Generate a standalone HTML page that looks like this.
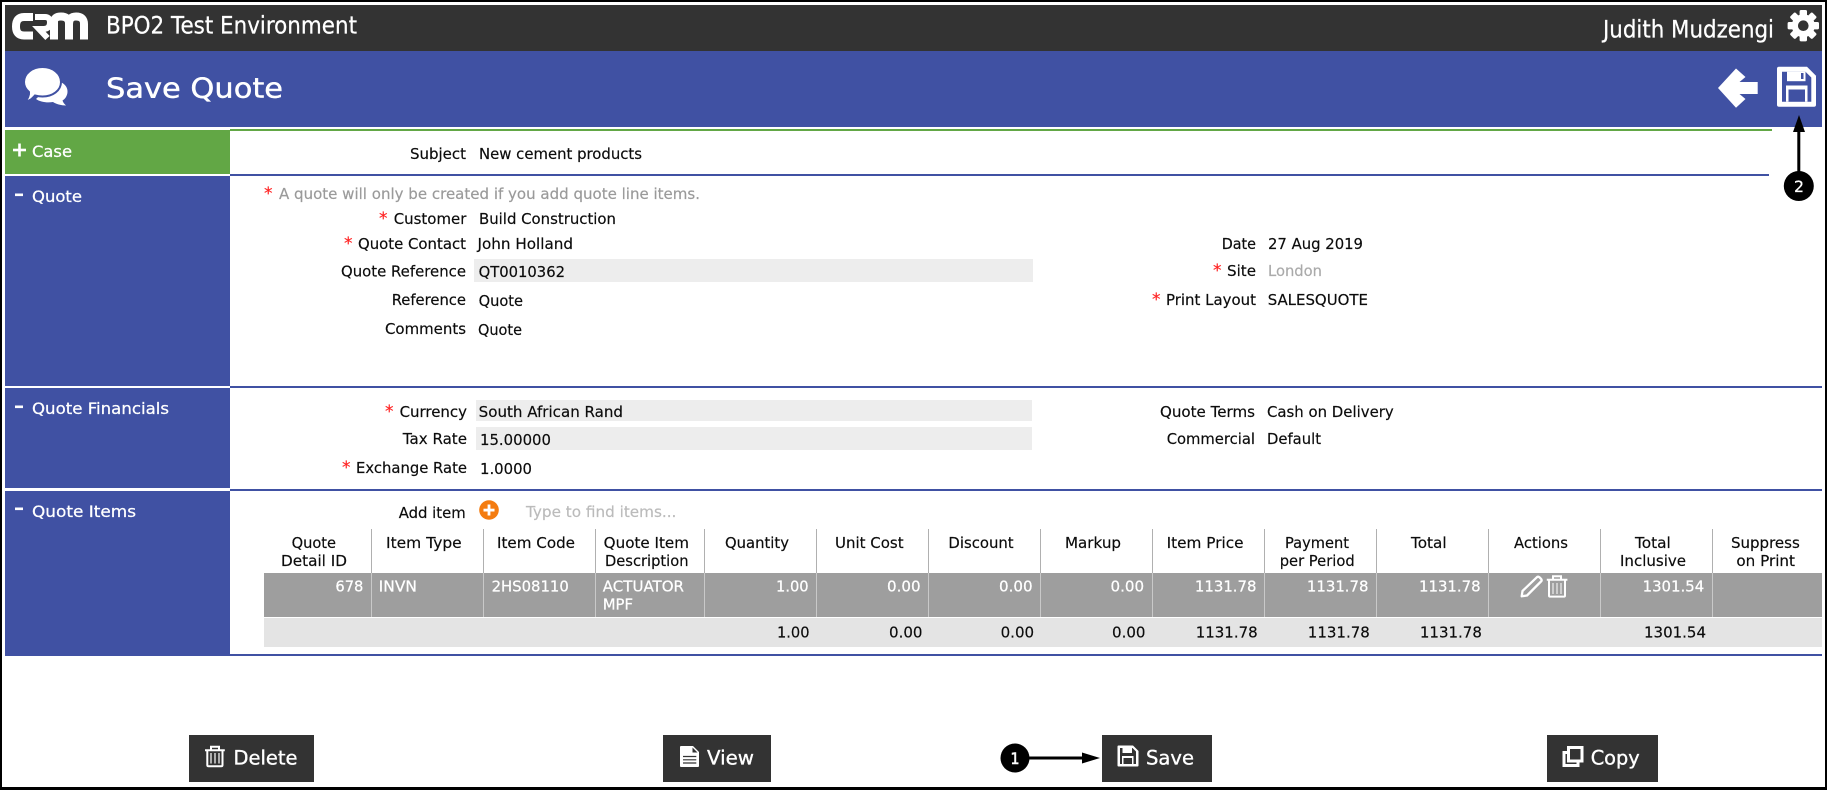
<!DOCTYPE html>
<html><head><meta charset="utf-8"><title>Save Quote</title>
<style>
html,body{margin:0;padding:0;background:#fff;width:1827px;height:790px;overflow:hidden}
svg{display:block}
text{font-family:"DejaVu Sans","Liberation Sans",sans-serif;font-size:15px;fill:#0c0c0c;stroke:#0c0c0c;stroke-width:.18px}
.w{fill:#fff;stroke:#fff;stroke-width:.25px}.g{fill:#9a9a9a;stroke:#9a9a9a}.l{fill:#aaa;stroke:#aaa}.p{fill:#bbb;stroke:#bbb}.r{fill:#f22;stroke:#f22;font-size:17px}
.s{font-size:16px;fill:#fff;stroke:#fff;stroke-width:.25px}.b{font-size:19.5px;fill:#fff;stroke:#fff;stroke-width:.35px}
</style></head><body>
<svg width="1827" height="790" viewBox="0 0 1827 790" xmlns="http://www.w3.org/2000/svg">
<rect width="1827" height="790" fill="#fff"/>
<!-- bars -->
<rect x="5" y="5" width="1817" height="46" fill="#333"/>
<rect x="5" y="51" width="1817" height="76" fill="#4051a3"/>
<!-- logo -->
<g fill="none" stroke="#fff">
<path d="M33 17H24Q16 17 16 26.500Q16 35.500 24 35.500H33" stroke-width="8"/>
<path d="M35 17H45Q50 17 50 22.500Q50 28.500 44 29H39L47.500 38" stroke-width="6"/>
<path d="M54 39.500V22Q54 16.500 61 16.500Q69 16.500 69 24V39.500M69 24Q69 16.500 76 16.500Q84 16.500 84 24V39.500" stroke-width="8"/>
</g>
<text class="w" x="106" y="33.500" style="font-size:24px" textLength="251" lengthAdjust="spacingAndGlyphs">BPO2 Test Environment</text>
<text class="w" x="1603" y="37.500" style="font-size:24px" textLength="171" lengthAdjust="spacingAndGlyphs">Judith Mudzengi</text>
<!-- gear -->
<g transform="translate(1803.300 25.700)" fill="#fff">
<rect x="-3.700" y="-15.700" width="7.400" height="31.400" rx="1.500"/>
<rect x="-3.700" y="-15.700" width="7.400" height="31.400" rx="1.500" transform="rotate(45)"/>
<rect x="-3.700" y="-15.700" width="7.400" height="31.400" rx="1.500" transform="rotate(90)"/>
<rect x="-3.700" y="-15.700" width="7.400" height="31.400" rx="1.500" transform="rotate(135)"/>
<circle r="11.500"/><circle r="5.300" fill="#333"/>
</g>
<!-- bubbles -->
<path d="M55 81C62 81 68 86 67.500 92C67.300 96 65 99 62.500 100.500C63 102.500 64.500 104 66 105.500C61 105.500 56 104 53 102C47 103 40 102 36 99Z" fill="#fff"/>
<path d="M42.500 67C52.700 67 61 73.500 61 82C61 90.500 52.700 96.500 42.500 96.500C39.500 96.500 37 96 35 95.500C32 98.500 30 101 25.500 101.500C27.500 98.500 29.500 95.500 29 92C26 89.500 24 86 24 82C24 73.500 32.300 67 42.500 67Z" fill="#fff" stroke="#4051a3" stroke-width="2"/>
<text class="w" x="106" y="97.500" style="font-size:28px;stroke-width:.4px" textLength="177" lengthAdjust="spacingAndGlyphs">Save Quote</text>
<!-- back arrow -->
<path d="M1718 88L1736 68.500L1745.500 77L1739.500 82H1757.700V94H1739.500L1745.500 99L1736 107.700Z" fill="#fff"/>
<!-- floppy large -->
<g>
<path d="M1779 66.700H1807L1816 75.700V104.700Q1816 106.700 1814 106.700H1779Q1777 106.700 1777 104.700V68.700Q1777 66.700 1779 66.700Z" fill="#fff"/>
<path d="M1782 71.700H1805.500L1811.300 77.500V101.700H1782Z" fill="#4051a3"/>
<rect x="1787" y="71.700" width="18.500" height="9.500" fill="#fff"/>
<rect x="1801" y="73" width="2.500" height="6" fill="#4051a3"/>
<rect x="1786" y="85.500" width="21.500" height="16.200" fill="#fff"/>
<rect x="1788.500" y="89.500" width="16.500" height="12.200" fill="#4051a3"/>
</g>
<!-- sidebars -->
<rect x="5" y="130" width="225" height="44" fill="#62a745"/>
<rect x="5" y="176" width="225" height="210" fill="#4051a3"/>
<rect x="5" y="388" width="225" height="100" fill="#4051a3"/>
<rect x="5" y="491" width="225" height="165" fill="#4051a3"/>
<rect x="13" y="148.700" width="13" height="2.600" fill="#fff"/><rect x="18.200" y="143.500" width="2.600" height="13" fill="#fff"/>
<rect x="15" y="193.500" width="8" height="2.600" fill="#fff"/>
<rect x="15" y="405.500" width="8" height="2.600" fill="#fff"/>
<rect x="15" y="507.500" width="8" height="2.600" fill="#fff"/>
<text class="s" x="32" y="157" textLength="40" lengthAdjust="spacingAndGlyphs">Case</text>
<text class="s" x="32" y="202" textLength="50" lengthAdjust="spacingAndGlyphs">Quote</text>
<text class="s" x="32" y="413.800" textLength="137" lengthAdjust="spacingAndGlyphs">Quote Financials</text>
<text class="s" x="32" y="517" textLength="104" lengthAdjust="spacingAndGlyphs">Quote Items</text>
<!-- section lines -->
<rect x="230" y="129" width="1542" height="2" fill="#62a745"/>
<rect x="230" y="174" width="1539" height="2" fill="#4051a3"/>
<rect x="230" y="386" width="1592" height="2" fill="#4051a3"/>
<rect x="230" y="489" width="1592" height="2" fill="#4051a3"/>
<rect x="5" y="654" width="1817" height="2" fill="#4051a3"/>
<!-- inputs -->
<rect x="474" y="259" width="559" height="23" fill="#ededed"/>
<rect x="476" y="400" width="556" height="21" fill="#ededed"/>
<rect x="476" y="427" width="556" height="23" fill="#ededed"/>
<!-- case -->
<text x="410" y="159" textLength="56" lengthAdjust="spacingAndGlyphs">Subject</text>
<text x="479" y="159" textLength="163" lengthAdjust="spacingAndGlyphs">New cement products</text>
<!-- quote -->
<text class="r" x="264" y="199">*</text>
<text class="g" x="279" y="199" textLength="421" lengthAdjust="spacingAndGlyphs">A quote will only be created if you add quote line items.</text>
<text class="r" x="379" y="224">*</text>
<text x="393.700" y="224" textLength="72.700" lengthAdjust="spacingAndGlyphs">Customer</text>
<text x="479" y="224" textLength="137" lengthAdjust="spacingAndGlyphs">Build Construction</text>
<text class="r" x="344" y="249">*</text>
<text x="358" y="249" textLength="108" lengthAdjust="spacingAndGlyphs">Quote Contact</text>
<text x="477.500" y="249" textLength="95.500" lengthAdjust="spacingAndGlyphs">John Holland</text>
<text x="341" y="276.500" textLength="125" lengthAdjust="spacingAndGlyphs">Quote Reference</text>
<text x="478.600" y="277" textLength="86.400" lengthAdjust="spacingAndGlyphs">QT0010362</text>
<text x="391.700" y="305" textLength="74.300" lengthAdjust="spacingAndGlyphs">Reference</text>
<text x="478.600" y="306" textLength="44.400" lengthAdjust="spacingAndGlyphs">Quote</text>
<text x="385" y="334" textLength="81" lengthAdjust="spacingAndGlyphs">Comments</text>
<text x="478" y="335" textLength="44" lengthAdjust="spacingAndGlyphs">Quote</text>
<text x="1221.700" y="249" textLength="34.300" lengthAdjust="spacingAndGlyphs">Date</text>
<text x="1268" y="249" textLength="95" lengthAdjust="spacingAndGlyphs">27 Aug 2019</text>
<text class="r" x="1213" y="276">*</text>
<text x="1227" y="276" textLength="29" lengthAdjust="spacingAndGlyphs">Site</text>
<text class="l" x="1268" y="276" textLength="54" lengthAdjust="spacingAndGlyphs">London</text>
<text class="r" x="1152" y="305">*</text>
<text x="1166" y="305" textLength="90" lengthAdjust="spacingAndGlyphs">Print Layout</text>
<text x="1267.700" y="305" textLength="100.300" lengthAdjust="spacingAndGlyphs">SALESQUOTE</text>
<!-- financials -->
<text class="r" x="385" y="417">*</text>
<text x="399.600" y="417" textLength="67.400" lengthAdjust="spacingAndGlyphs">Currency</text>
<text x="478.700" y="417" textLength="144.300" lengthAdjust="spacingAndGlyphs">South African Rand</text>
<text x="402.800" y="444" textLength="64.200" lengthAdjust="spacingAndGlyphs">Tax Rate</text>
<text x="480" y="445" textLength="71" lengthAdjust="spacingAndGlyphs">15.00000</text>
<text class="r" x="342" y="473">*</text>
<text x="356" y="473" textLength="111" lengthAdjust="spacingAndGlyphs">Exchange Rate</text>
<text x="480" y="474" textLength="52" lengthAdjust="spacingAndGlyphs">1.0000</text>
<text x="1160" y="417" textLength="95" lengthAdjust="spacingAndGlyphs">Quote Terms</text>
<text x="1267" y="417" textLength="126.700" lengthAdjust="spacingAndGlyphs">Cash on Delivery</text>
<text x="1166.700" y="444" textLength="88.300" lengthAdjust="spacingAndGlyphs">Commercial</text>
<text x="1267" y="444" textLength="54" lengthAdjust="spacingAndGlyphs">Default</text>
<!-- add item -->
<text x="398.700" y="518" textLength="67" lengthAdjust="spacingAndGlyphs">Add item</text>
<circle cx="489" cy="510" r="9.800" fill="#f47c10"/>
<rect x="483.500" y="508.700" width="11" height="2.800" fill="#fff"/><rect x="487.600" y="504.500" width="2.800" height="11" fill="#fff"/>
<text class="p" x="526" y="517" textLength="150.400" lengthAdjust="spacingAndGlyphs">Type to find items...</text>
<!-- table -->
<rect x="264" y="573" width="1558" height="44" fill="#9e9e9e"/>
<rect x="264" y="618" width="1558" height="29" fill="#e4e4e4"/>
<g fill="#b0b0b0">
<rect x="371" y="529" width="1" height="44"/><rect x="483" y="529" width="1" height="44"/><rect x="595" y="529" width="1" height="44"/><rect x="704" y="529" width="1" height="44"/><rect x="816" y="529" width="1" height="44"/><rect x="928" y="529" width="1" height="44"/><rect x="1040" y="529" width="1" height="44"/><rect x="1152" y="529" width="1" height="44"/><rect x="1264" y="529" width="1" height="44"/><rect x="1376" y="529" width="1" height="44"/><rect x="1488" y="529" width="1" height="44"/><rect x="1600" y="529" width="1" height="44"/><rect x="1712" y="529" width="1" height="44"/>
</g>
<g fill="#c9c9c9">
<rect x="371" y="573" width="1" height="44"/><rect x="483" y="573" width="1" height="44"/><rect x="595" y="573" width="1" height="44"/><rect x="704" y="573" width="1" height="44"/><rect x="816" y="573" width="1" height="44"/><rect x="928" y="573" width="1" height="44"/><rect x="1040" y="573" width="1" height="44"/><rect x="1152" y="573" width="1" height="44"/><rect x="1264" y="573" width="1" height="44"/><rect x="1376" y="573" width="1" height="44"/><rect x="1488" y="573" width="1" height="44"/><rect x="1600" y="573" width="1" height="44"/><rect x="1712" y="573" width="1" height="44"/>
</g>
<text x="291.600" y="548" textLength="44.400" lengthAdjust="spacingAndGlyphs">Quote</text>
<text x="281" y="566" textLength="66" lengthAdjust="spacingAndGlyphs">Detail ID</text>
<text x="386" y="548" textLength="75.700" lengthAdjust="spacingAndGlyphs">Item Type</text>
<text x="497" y="548" textLength="78" lengthAdjust="spacingAndGlyphs">Item Code</text>
<text x="603.700" y="548" textLength="85.300" lengthAdjust="spacingAndGlyphs">Quote Item</text>
<text x="605" y="566" textLength="83.500" lengthAdjust="spacingAndGlyphs">Description</text>
<text x="725" y="548" textLength="64" lengthAdjust="spacingAndGlyphs">Quantity</text>
<text x="835" y="548" textLength="68.600" lengthAdjust="spacingAndGlyphs">Unit Cost</text>
<text x="948.400" y="548" textLength="65.200" lengthAdjust="spacingAndGlyphs">Discount</text>
<text x="1065" y="548" textLength="56" lengthAdjust="spacingAndGlyphs">Markup</text>
<text x="1166.700" y="548" textLength="76.800" lengthAdjust="spacingAndGlyphs">Item Price</text>
<text x="1285" y="548" textLength="64" lengthAdjust="spacingAndGlyphs">Payment</text>
<text x="1279.700" y="566" textLength="75" lengthAdjust="spacingAndGlyphs">per Period</text>
<text x="1411" y="548" textLength="35.600" lengthAdjust="spacingAndGlyphs">Total</text>
<text x="1514" y="548" textLength="54" lengthAdjust="spacingAndGlyphs">Actions</text>
<text x="1635" y="548" textLength="35.800" lengthAdjust="spacingAndGlyphs">Total</text>
<text x="1620" y="566" textLength="66" lengthAdjust="spacingAndGlyphs">Inclusive</text>
<text x="1731" y="548" textLength="68.800" lengthAdjust="spacingAndGlyphs">Suppress</text>
<text x="1736.400" y="566" textLength="58.600" lengthAdjust="spacingAndGlyphs">on Print</text>
<!-- row -->
<g>
<text class="w" x="335.400" y="591.700" textLength="28" lengthAdjust="spacingAndGlyphs">678</text>
<text class="w" x="378.700" y="591.700" textLength="38.300" lengthAdjust="spacingAndGlyphs">INVN</text>
<text class="w" x="491.600" y="591.700" textLength="77.200" lengthAdjust="spacingAndGlyphs">2HS08110</text>
<text class="w" x="602.800" y="591.700" textLength="81.200" lengthAdjust="spacingAndGlyphs">ACTUATOR</text>
<text class="w" x="602.800" y="609.700" textLength="30.200" lengthAdjust="spacingAndGlyphs">MPF</text>
<text class="w" x="776" y="591.700" textLength="32.600" lengthAdjust="spacingAndGlyphs">1.00</text>
<text class="w" x="887" y="591.700" textLength="33.600" lengthAdjust="spacingAndGlyphs">0.00</text>
<text class="w" x="999" y="591.700" textLength="33.600" lengthAdjust="spacingAndGlyphs">0.00</text>
<text class="w" x="1110.500" y="591.700" textLength="33.600" lengthAdjust="spacingAndGlyphs">0.00</text>
<text class="w" x="1194.900" y="591.700" textLength="61.600" lengthAdjust="spacingAndGlyphs">1131.78</text>
<text class="w" x="1306.900" y="591.700" textLength="61.600" lengthAdjust="spacingAndGlyphs">1131.78</text>
<text class="w" x="1419" y="591.700" textLength="61.600" lengthAdjust="spacingAndGlyphs">1131.78</text>
<text class="w" x="1642.600" y="591.700" textLength="61.600" lengthAdjust="spacingAndGlyphs">1301.54</text>
</g>
<!-- pencil -->
<path d="M1536.800 577.300Q1538 576 1539.500 577.300L1541 578.800Q1542.300 580.300 1541 581.500L1527 595.500L1521.700 596.300L1522.500 591Z" fill="none" stroke="#fff" stroke-width="2.300" stroke-linejoin="round"/>
<!-- row trash -->
<g fill="none" stroke="#fff" stroke-width="2">
<path d="M1546.800 579.800H1567.400"/>
<path d="M1553 579.500V576.200H1561V579.500" />
<path d="M1549 580V595.600Q1549 596.600 1550 596.600H1564Q1565 596.600 1565 595.600V580"/>
<path d="M1553 583V594M1557 583V594M1561 583V594" stroke-width="1"/>
</g>
<!-- total row -->
<text x="777" y="637.300" textLength="32.500" lengthAdjust="spacingAndGlyphs">1.00</text>
<text x="889" y="637.300" textLength="33.500" lengthAdjust="spacingAndGlyphs">0.00</text>
<text x="1000.600" y="637.300" textLength="33.500" lengthAdjust="spacingAndGlyphs">0.00</text>
<text x="1112" y="637.300" textLength="33.500" lengthAdjust="spacingAndGlyphs">0.00</text>
<text x="1195.700" y="637.300" textLength="62" lengthAdjust="spacingAndGlyphs">1131.78</text>
<text x="1307.800" y="637.300" textLength="62" lengthAdjust="spacingAndGlyphs">1131.78</text>
<text x="1419.900" y="637.300" textLength="62" lengthAdjust="spacingAndGlyphs">1131.78</text>
<text x="1644" y="637.300" textLength="62" lengthAdjust="spacingAndGlyphs">1301.54</text>
<!-- buttons -->
<rect x="189" y="735" width="125" height="47" fill="#333"/>
<rect x="663" y="735" width="108" height="47" fill="#333"/>
<rect x="1102" y="735" width="110" height="47" fill="#333"/>
<rect x="1547" y="735" width="111" height="47" fill="#333"/>
<text class="b" x="233.500" y="764.300" textLength="64" lengthAdjust="spacingAndGlyphs">Delete</text>
<text class="b" x="707" y="764.300" textLength="47" lengthAdjust="spacingAndGlyphs">View</text>
<text class="b" x="1146" y="764.300" textLength="48" lengthAdjust="spacingAndGlyphs">Save</text>
<text class="b" x="1590.700" y="764.300" textLength="49" lengthAdjust="spacingAndGlyphs">Copy</text>
<!-- delete icon -->
<g fill="none" stroke="#fff" stroke-width="2">
<path d="M205 750.200H224.800"/>
<path d="M211 750V746.800H219V750"/>
<path d="M207.300 750.500V765Q207.300 766.300 208.600 766.300H221.200Q222.500 766.300 222.500 765V750.500"/>
<path d="M211 753V763.500M215 753V763.500M219 753V763.500" stroke-width="1.200"/>
</g>
<!-- view icon -->
<path d="M681 746H693L699 752V766Q699 767 698 767H681Q680 767 680 766V747Q680 746 681 746Z" fill="#fff"/>
<path d="M692.500 747.500V752.500H697.500Z" fill="#333"/>
<path d="M683 756.500H696.300M683 759.800H696.300M683 763H696.300" stroke="#333" stroke-width="1.200"/>
<!-- save icon -->
<path d="M1118.500 745.500H1133L1138.500 751V765.500Q1138.500 766.500 1137.500 766.500H1118.500Q1117.500 766.500 1117.500 765.500V746.500Q1117.500 745.500 1118.500 745.500Z" fill="#fff"/>
<path d="M1120 748H1132.500L1136 751.500V764H1120Z" fill="#333"/>
<rect x="1122.500" y="748" width="9.500" height="5" fill="#fff"/>
<rect x="1122" y="756" width="11.500" height="8" fill="#fff"/><rect x="1123.500" y="758" width="8.500" height="6" fill="#333"/>
<!-- copy icon -->
<rect x="1564" y="752.500" width="14" height="13" fill="none" stroke="#fff" stroke-width="3"/>
<rect x="1568.500" y="747.500" width="13.500" height="13.500" fill="#333" stroke="#fff" stroke-width="3"/>
<!-- callouts -->
<circle cx="1015" cy="758" r="14.500" fill="#000"/>
<text class="w" x="1010.500" y="764" style="font-size:16px;stroke-width:.6px" textLength="9" lengthAdjust="spacingAndGlyphs">1</text>
<rect x="1029" y="756.500" width="56" height="3" fill="#000"/>
<path d="M1082 752.500L1100 758L1082 763.500Z" fill="#000"/>
<circle cx="1798.800" cy="186" r="15" fill="#000"/>
<text class="w" x="1794" y="192" style="font-size:16px" textLength="10" lengthAdjust="spacingAndGlyphs">2</text>
<rect x="1797.300" y="128" width="3" height="44" fill="#000"/>
<path d="M1793 132L1799 115L1805 132Z" fill="#000"/>
<!-- outer frame -->
<rect x="0" y="0" width="1827" height="2" fill="#000"/>
<rect x="0" y="0" width="2" height="790" fill="#000"/>
<rect x="1825" y="0" width="2" height="790" fill="#000"/>
<rect x="0" y="787" width="1827" height="3" fill="#000"/>
</svg>
</body></html>
